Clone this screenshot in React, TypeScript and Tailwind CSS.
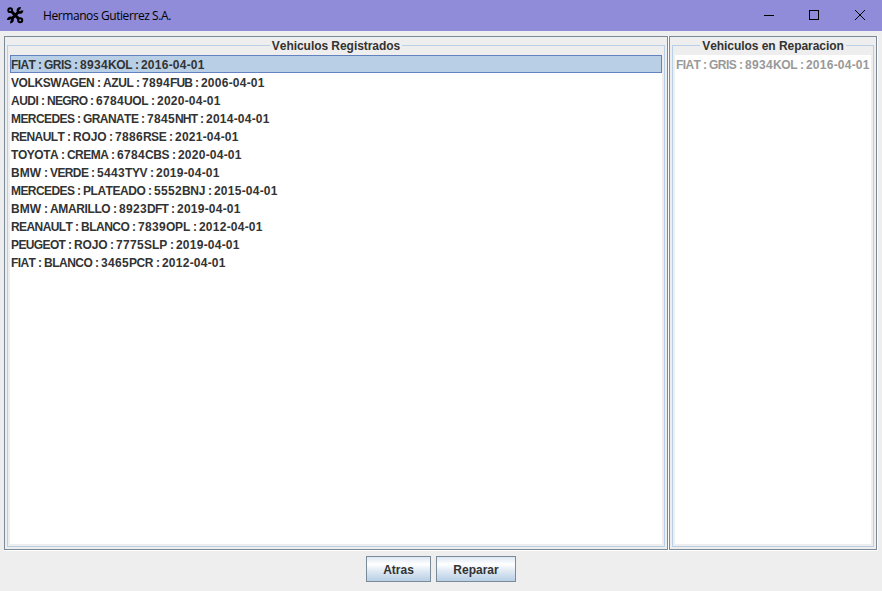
type Vehicle = { fields: [brand: string, color: string, plate: string]; widths: [number, number, number]; date: string };

// Field widths, in pixels, include the separator that follows each field.
const vehicles: Vehicle[] = [
  { fields: ['FIAT', 'GRIS', '8934KOL'], widths: [33, 36, 61], date: '2016-04-01' },
  { fields: ['VOLKSWAGEN', 'AZUL', '7894FUB'], widths: [92, 39, 59], date: '2006-04-01' },
  { fields: ['AUDI', 'NEGRO', '6784UOL'], widths: [36, 49, 61], date: '2020-04-01' },
  { fields: ['MERCEDES', 'GRANATE', '7845NHT'], widths: [72, 64, 59], date: '2014-04-01' },
  { fields: ['RENAULT', 'ROJO', '7886RSE'], widths: [62, 42, 60], date: '2021-04-01' },
  { fields: ['TOYOTA', 'CREMA', '6784CBS'], widths: [56, 50, 61], date: '2020-04-01' },
  { fields: ['BMW', 'VERDE', '5443TYV'], widths: [39, 47, 59], date: '2019-04-01' },
  { fields: ['MERCEDES', 'PLATEADO', '5552BNJ'], widths: [72, 71, 60], date: '2015-04-01' },
  { fields: ['BMW', 'AMARILLO', '8923DFT'], widths: [39, 69, 58], date: '2019-04-01' },
  { fields: ['REANAULT', 'BLANCO', '7839OPL'], widths: [70, 57, 61], date: '2012-04-01' },
  { fields: ['PEUGEOT', 'ROJO', '7775SLP'], widths: [63, 42, 60], date: '2019-04-01' },
  { fields: ['FIAT', 'BLANCO', '3465PCR'], widths: [33, 57, 61], date: '2012-04-01' },
];

// Bold advance widths, in thousandths of an em.
const advances: Record<string, number> = {
  A: 722, B: 722, C: 722, D: 722, E: 667, F: 611, G: 778, H: 722, I: 278, J: 556, K: 722, L: 611, M: 833,
  N: 722, O: 778, P: 667, R: 722, S: 667, T: 611, U: 722, V: 667, W: 944, Y: 667, Z: 611,
};

function tracking(word: string, width: number) {
  const natural = [...word].reduce((sum, ch) => sum + advances[ch] * 0.012, 0);
  return `${((width - natural) / word.length).toFixed(3)}px`;
}

function Digits({ text }: { text: string }) {
  return <span className="tracking-[0.3px]">{text}</span>;
}

function Entry({ vehicle }: { vehicle: Vehicle }) {
  return (
    <>
      {vehicle.fields.map((field, i) => {
        const digits = field.replace(/\D/g, '');
        const letters = field.replace(/\d/g, '');
        const width = vehicle.widths[i] - 8.7 - digits.length * 7;
        return (
          <span key={i}>
            {digits && <Digits text={digits} />}
            <span style={{ letterSpacing: tracking(letters, width) }}>{letters}</span>
            <span className="tracking-[-0.66px]">{' : '}</span>
          </span>
        );
      })}
      <Digits text={vehicle.date.slice(0, 4)} />-<Digits text={vehicle.date.slice(5, 7)} />-
      <Digits text={vehicle.date.slice(8)} />
    </>
  );
}

function Panel({ title, className, children }: { title: string; className: string; children: React.ReactNode }) {
  return (
    <section className={`flex h-[515px] border-r border-b border-white ${className}`}>
      <div className="flex min-w-0 flex-1 flex-col border border-[#7a8a99] px-[2px] pb-[2px]">
        <div className="flex h-[17px] shrink-0 items-center">
          <span className="h-[9px] flex-1 self-end border-t border-l border-[#b8cfe5]" />
          <h2 className="h-[17px] px-[2px] text-[12px] leading-[19px] tracking-[-0.05px] whitespace-nowrap">{title}</h2>
          <span className="h-[9px] flex-1 self-end border-t border-r border-[#b8cfe5]" />
        </div>
        <div className="flex min-h-0 flex-1 border border-t-0 border-[#b8cfe5] px-[2px] pt-[1px] pb-[2px]">
          <ul className="min-w-0 flex-1 bg-white">{children}</ul>
        </div>
      </div>
    </section>
  );
}

function Button({ label, className }: { label: string; className: string }) {
  return (
    <button
      className={`h-[26px] border border-[#7a8a99] bg-[linear-gradient(#dde8f3_0%,#ffffff_30%,#dde8f3_60%,#b8cfe5_100%)] pt-[1px] text-[12px] leading-[25px] font-bold ${className}`}
    >
      {label}
    </button>
  );
}

export default function App() {
  return (
    <div className="flex h-[591px] w-[882px] flex-col overflow-hidden bg-[#eeeeee] font-['Liberation_Sans',Arial,sans-serif] text-[12px] font-bold text-[#333333] [font-kerning:none]">
      <header className="flex h-[31px] shrink-0 items-center bg-[#918cd9] font-['Open_Sans',sans-serif] font-normal text-black">
        <svg className="ml-[7px]" width="17" height="17" viewBox="0 0 17 17" fill="none" stroke="#000">
          <path d="M4.5 4.5L12 12M12 4.5L4.5 12" strokeWidth="3" />
          <circle cx="3.2" cy="3.2" r="1.9" strokeWidth="2" />
          <circle cx="13.2" cy="13.2" r="2" strokeWidth="2.1" />
          <path d="M13.6 1.4A2.1 2.1 0 1 0 15.1 3.4" strokeWidth="2.6" />
          <path d="M1.3 13A2.1 2.1 0 1 1 3.2 15.1" strokeWidth="2.6" />
        </svg>
        <span className="ml-[19px] text-[12px] tracking-[-0.42px]">Hermanos Gutierrez S.A.</span>
        <svg className="ml-auto" width="119" height="31" viewBox="0 0 119 31" fill="none" stroke="#000" shapeRendering="crispEdges">
          <path d="M1 15.5h10M46.5 10.5h9v9h-9z" />
          <path d="M92 10l10 10M102 10l-10 10" shapeRendering="auto" />
        </svg>
      </header>
      <main className="flex shrink-0 pt-[5px] pl-[4px]">
        <Panel title="Vehiculos Registrados" className="w-[665px]">
          {vehicles.map((v, i) => (
            <li
              key={v.fields[2]}
              className={`h-[18px] border leading-[18px] whitespace-nowrap ${i === 0 ? 'border-[#6382bf] bg-[#b8cfe5]' : 'border-transparent'}`}
            >
              <Entry vehicle={v} />
            </li>
          ))}
        </Panel>
        <Panel title="Vehiculos en Reparacion" className="w-[209px]">
          <li className="h-[18px] border border-transparent leading-[18px] whitespace-nowrap text-[#999999]">
            <Entry vehicle={vehicles[0]} />
          </li>
        </Panel>
      </main>
      <footer className="flex justify-center gap-[5px] pt-[5px]">
        <Button label="Atras" className="w-[65px]" />
        <Button label="Reparar" className="w-[80px]" />
      </footer>
    </div>
  );
}
